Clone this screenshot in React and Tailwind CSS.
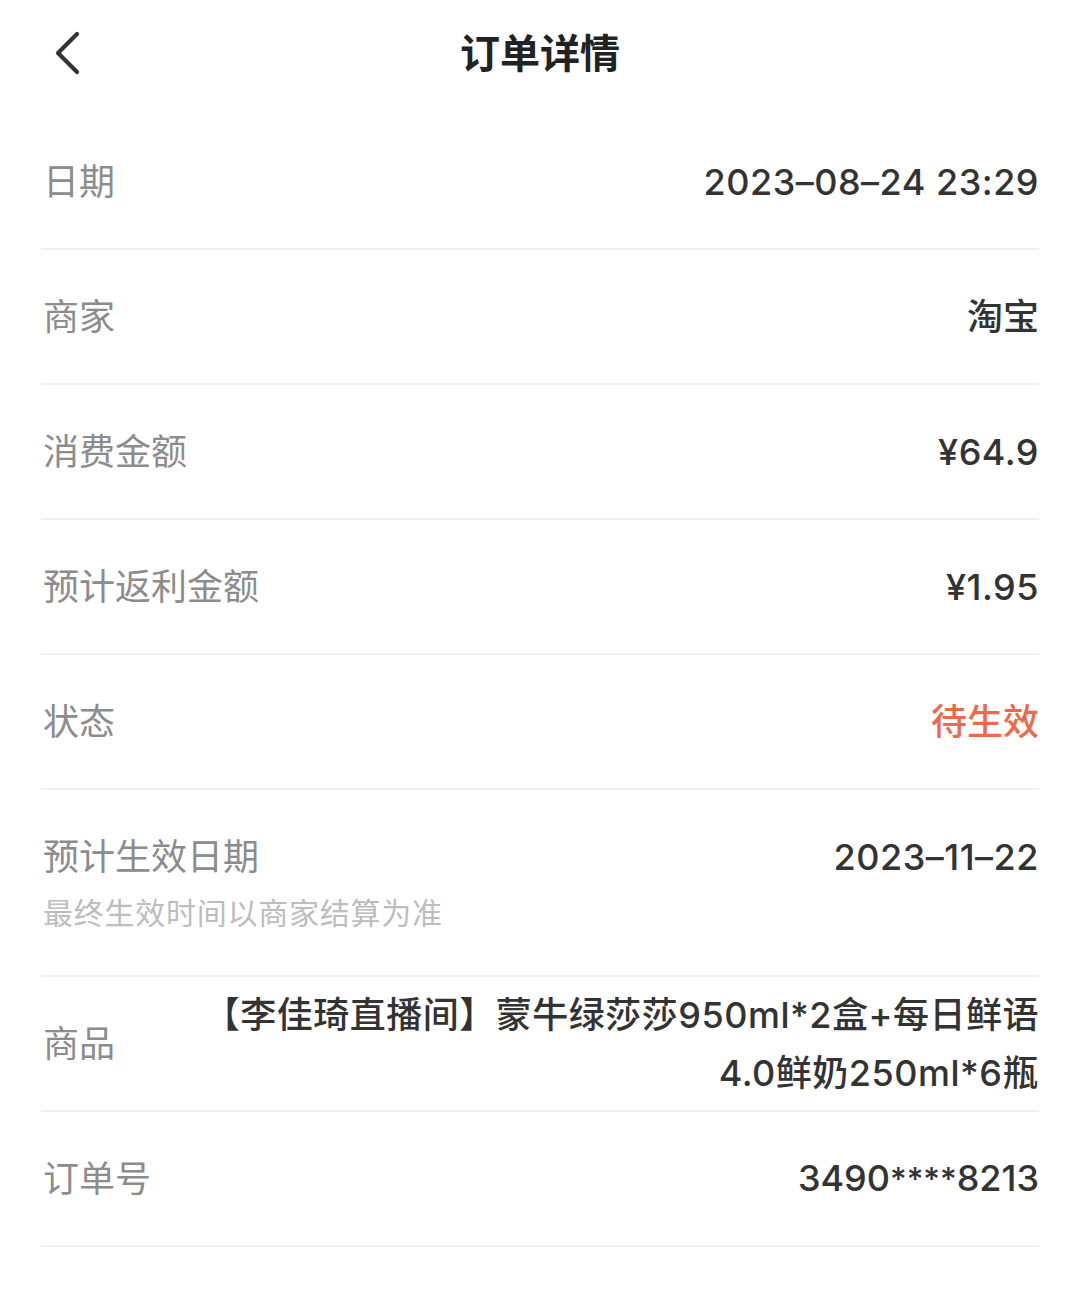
import React from "react";

const FONT = { fontFamily: '"Noto Sans", "Noto Sans CJK SC", sans-serif' };
const VFONT = { fontFamily: 'Inter, "Noto Sans CJK SC", sans-serif' };

function Row({ label, children, valueClass = "" }) {
  return (
    <div className="flex h-[135px] items-center justify-between border-b-2 border-[#f0f0f0]">
      <div className="pl-[2px] text-[36px] leading-[48px] text-[#8c8c8c]">{label}</div>
      <div
        className={"text-right text-[36px] leading-[48px] font-medium " + (valueClass || "text-[#333333]")}
        style={VFONT}
      >
        {children}
      </div>
    </div>
  );
}

export default function App() {
  return (
    <div className="min-h-[1297px] w-[1080px] bg-white" style={FONT}>
      <div className="relative flex h-[115px] items-start justify-center pt-[27px]">
        <svg className="absolute left-[50px] top-[28px]" width="36" height="50" viewBox="0 0 36 50" fill="none">
          <polyline points="27,6 8,25 27,44" stroke="#333" strokeWidth="4.2" strokeLinecap="round" strokeLinejoin="round" />
        </svg>
        <div className="text-[40px] leading-[52px] font-bold text-[#222222]">订单详情</div>
      </div>
      <div className="px-[41px]">
        <Row label="日期"><span className="tracking-[0.5px]">2023–08–24 23:29</span></Row>
        <Row label="商家">淘宝</Row>
        <Row label="消费金额"><span className="tracking-[0.5px]">¥64.9</span></Row>
        <Row label="预计返利金额"><span className="tracking-[0.5px]">¥1.95</span></Row>
        <Row label="状态" valueClass="text-[#ec6a4b]">待生效</Row>
        <div className="flex items-start justify-between border-b-2 border-[#f0f0f0] pt-[43px] pb-[42px]">
          <div className="pl-[2px]">
            <div className="text-[36px] leading-[48px] text-[#8c8c8c]">预计生效日期</div>
            <div className="mt-[12px] text-[30px] leading-[40px] tracking-[0.75px] text-[#bdbdbd]">最终生效时间以商家结算为准</div>
          </div>
          <div className="text-[36px] leading-[48px] font-medium tracking-[0.5px] text-[#333333]" style={VFONT}>2023–11–22</div>
        </div>
        <div className="flex h-[135px] items-center justify-between border-b-2 border-[#f0f0f0]">
          <div className="shrink-0 pl-[2px] text-[36px] leading-[48px] text-[#8c8c8c]">商品</div>
          <div className="max-w-[850px] text-right text-[36px] leading-[58px] font-medium tracking-[0.5px] text-[#333333]" style={VFONT}>
            【李佳琦直播间】蒙牛绿莎莎950ml*2盒+每日鲜语4.0鲜奶250ml*6瓶
          </div>
        </div>
        <Row label="订单号">
          3490<span className="text-[32px]">****</span>8213
        </Row>
      </div>
    </div>
  );
}
